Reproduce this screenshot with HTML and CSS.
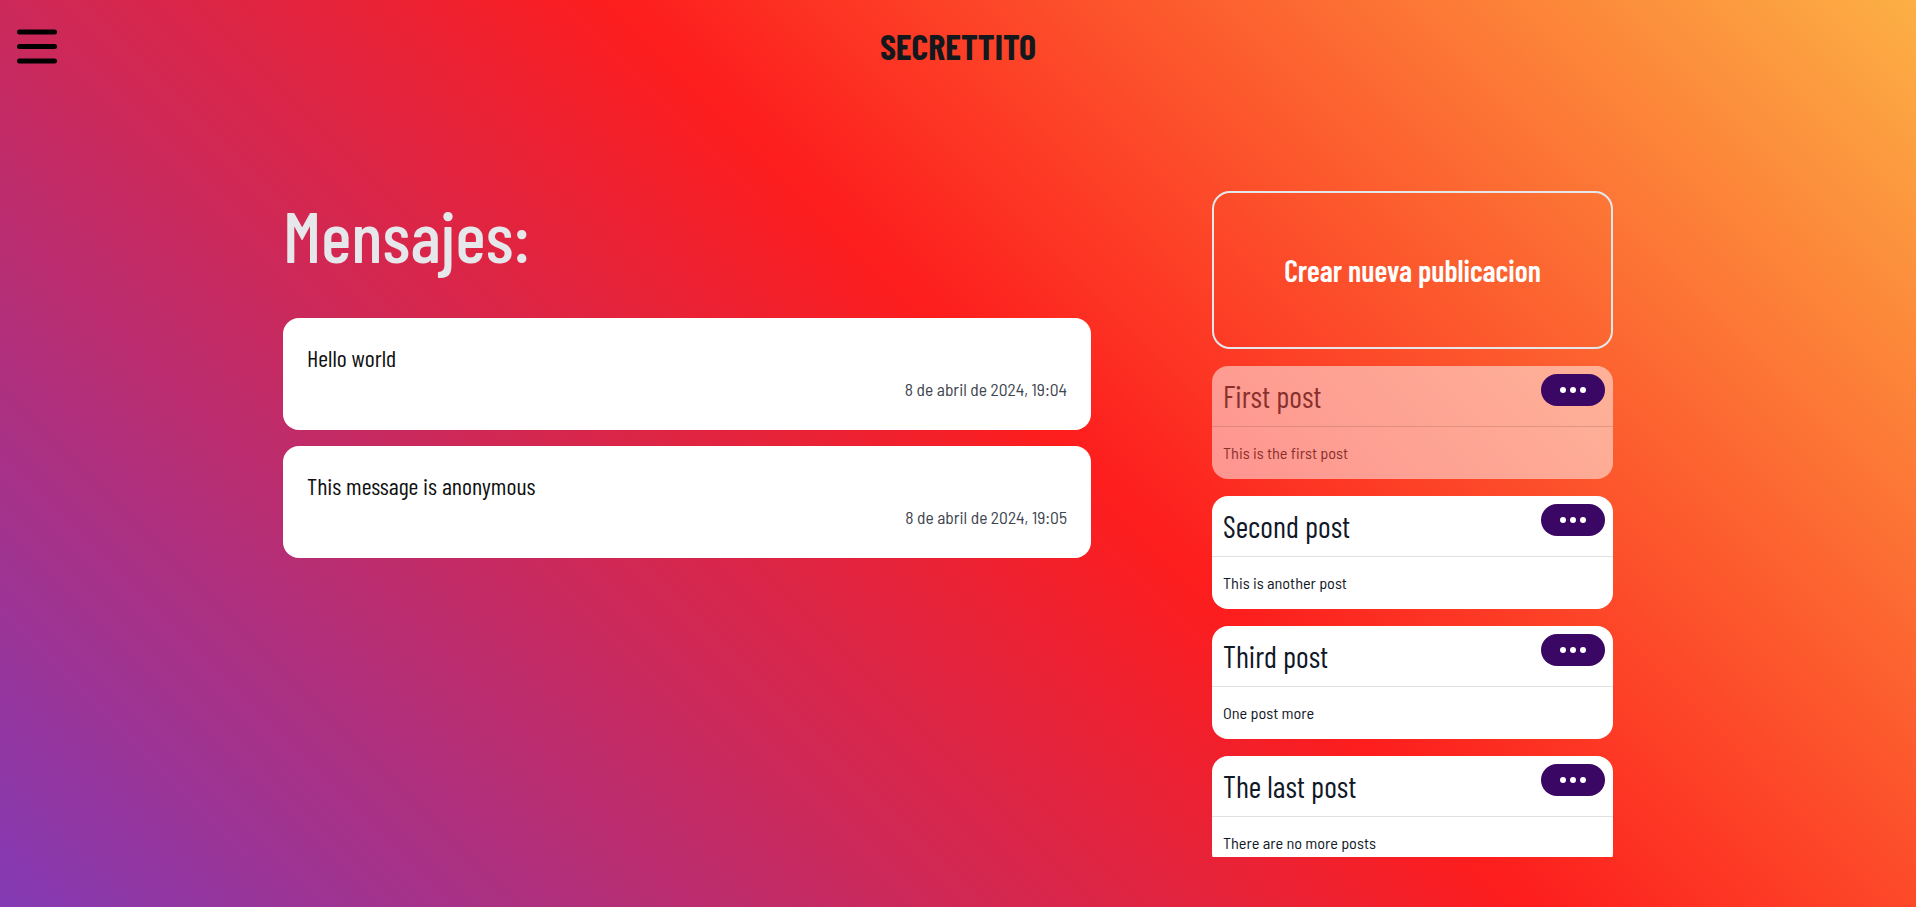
FILE: index.html
```html
<!DOCTYPE html>
<html lang="es">
<head>
<meta charset="utf-8">
<title>Secrettito</title>
<link rel="stylesheet" href="styles.css">
</head>
<body>
<header class="topbar">
  <button class="menu-btn" aria-label="Menu">
    <svg width="40" height="35" viewBox="0 0 40 35"><g stroke="#000" stroke-width="5" stroke-linecap="round"><line x1="2.5" y1="3" x2="37.5" y2="3"/><line x1="2.5" y1="17.5" x2="37.5" y2="17.5"/><line x1="2.5" y1="32" x2="37.5" y2="32"/></g></svg>
  </button>
  <div class="brand">SECRETTITO</div>
  <div></div>
</header>
<main class="layout">
  <section class="messages">
    <h1 class="messages-title">Mensajes:</h1>
    <div class="msg-list">
      <article class="msg-card">
        <p class="msg-text">Hello world</p>
        <p class="msg-date">8 de abril de 2024, 19:04</p>
      </article>
      <article class="msg-card">
        <p class="msg-text">This message is anonymous</p>
        <p class="msg-date">8 de abril de 2024, 19:05</p>
      </article>
    </div>
  </section>
  <aside class="posts">
    <button class="create-btn">Crear nueva publicacion</button>
    <article class="post-card is-active">
      <div class="post-head"><h2 class="post-title">First post</h2><button class="dots-btn" aria-label="Opciones"><svg width="26" height="6" viewBox="0 0 26 6"><circle cx="3" cy="3" r="3" fill="#fff"/><circle cx="13" cy="3" r="3" fill="#fff"/><circle cx="23" cy="3" r="3" fill="#fff"/></svg></button></div>
      <div class="post-body">This is the first post</div>
    </article>
    <article class="post-card">
      <div class="post-head"><h2 class="post-title">Second post</h2><button class="dots-btn" aria-label="Opciones"><svg width="26" height="6" viewBox="0 0 26 6"><circle cx="3" cy="3" r="3" fill="#fff"/><circle cx="13" cy="3" r="3" fill="#fff"/><circle cx="23" cy="3" r="3" fill="#fff"/></svg></button></div>
      <div class="post-body">This is another post</div>
    </article>
    <article class="post-card">
      <div class="post-head"><h2 class="post-title">Third post</h2><button class="dots-btn" aria-label="Opciones"><svg width="26" height="6" viewBox="0 0 26 6"><circle cx="3" cy="3" r="3" fill="#fff"/><circle cx="13" cy="3" r="3" fill="#fff"/><circle cx="23" cy="3" r="3" fill="#fff"/></svg></button></div>
      <div class="post-body">One post more</div>
    </article>
    <article class="post-card">
      <div class="post-head"><h2 class="post-title">The last post</h2><button class="dots-btn" aria-label="Opciones"><svg width="26" height="6" viewBox="0 0 26 6"><circle cx="3" cy="3" r="3" fill="#fff"/><circle cx="13" cy="3" r="3" fill="#fff"/><circle cx="23" cy="3" r="3" fill="#fff"/></svg></button></div>
      <div class="post-body">There are no more posts</div>
    </article>
  </aside>
</main>
</body>
</html>
```
FILE: styles.css
```css
* { box-sizing: border-box; }
html, body { height: 100%; }
body {
  margin: 0;
  overflow: hidden;
  font-family: "Barlow Condensed", "Barlow Semi Condensed", "Roboto Condensed", sans-serif;
  background: linear-gradient(45deg, #833ab4 0%, #fd1d1d 54%, #fcb045 100%);
  color: #111827;
}
.topbar {
  height: 92px;
  display: grid;
  grid-template-columns: 1fr auto 1fr;
  align-items: center;
  padding: 0 17px;
}
.menu-btn {
  background: none;
  border: 0;
  padding: 0;
  width: 40px;
  height: 35px;
  display: flex;
  justify-self: start;
  cursor: pointer;
}
.brand {
  font-size: 36px;
  font-weight: 700;
  line-height: 1;
  color: #12181c;
}
.layout {
  margin-top: 99px;
  display: flex;
  align-items: flex-start;
  justify-content: center;
  gap: 121px;
  padding-right: 20px;
}
.messages { width: 808px; }
.messages-title {
  margin: 0 0 41px;
  font-size: 72px;
  line-height: 1.2;
  font-weight: 500;
  color: #e5e7eb;
}
.msg-list { display: flex; flex-direction: column; gap: 16px; }
.msg-card {
  background: #fff;
  border-radius: 16px;
  padding: 23px 24px 27px;
}
.msg-text { margin: 0 0 2px; font-size: 24px; line-height: 33px; color: #111111; }
.msg-date {
  margin: 0;
  font-family: "Barlow Semi Condensed", "Barlow Condensed", sans-serif;
  font-size: 17.5px;
  line-height: 27px;
  text-align: right;
  color: #404650;
}
.posts {
  width: 401px;
  height: 666px;
  overflow: hidden;
  display: flex;
  flex-direction: column;
  gap: 17px;
}
.create-btn {
  flex: 0 0 158px;
  background: transparent;
  border: 2px solid #e5e7eb;
  border-radius: 18px;
  font-family: inherit;
  font-size: 30px;
  font-weight: 600;
  color: #fff;
  cursor: pointer;
}
.post-card {
  flex: 0 0 113px;
  background: #fff;
  border-radius: 16px;
  color: #111827;
}
.post-card.is-active {
  background: rgba(255, 255, 255, 0.5);
  color: #8a302c;
}
.post-head {
  height: 61px;
  display: flex;
  justify-content: space-between;
  align-items: flex-start;
  padding: 8px 8px 0 11px;
  border-bottom: 1px solid rgba(0, 0, 0, 0.12);
}
.post-title {
  margin: 4px 0 0;
  font-size: 30.5px;
  line-height: 1.2;
  font-weight: 400;
}
.dots-btn {
  width: 64px;
  height: 32px;
  border: 0;
  border-radius: 16px;
  background: #3b0764;
  display: flex;
  align-items: center;
  justify-content: center;
  padding: 0;
  cursor: pointer;
}
.post-body {
  padding: 13px 11px;
  font-family: "Barlow Semi Condensed", "Barlow Condensed", sans-serif;
  font-size: 16.3px;
  line-height: 26px;
}
```
